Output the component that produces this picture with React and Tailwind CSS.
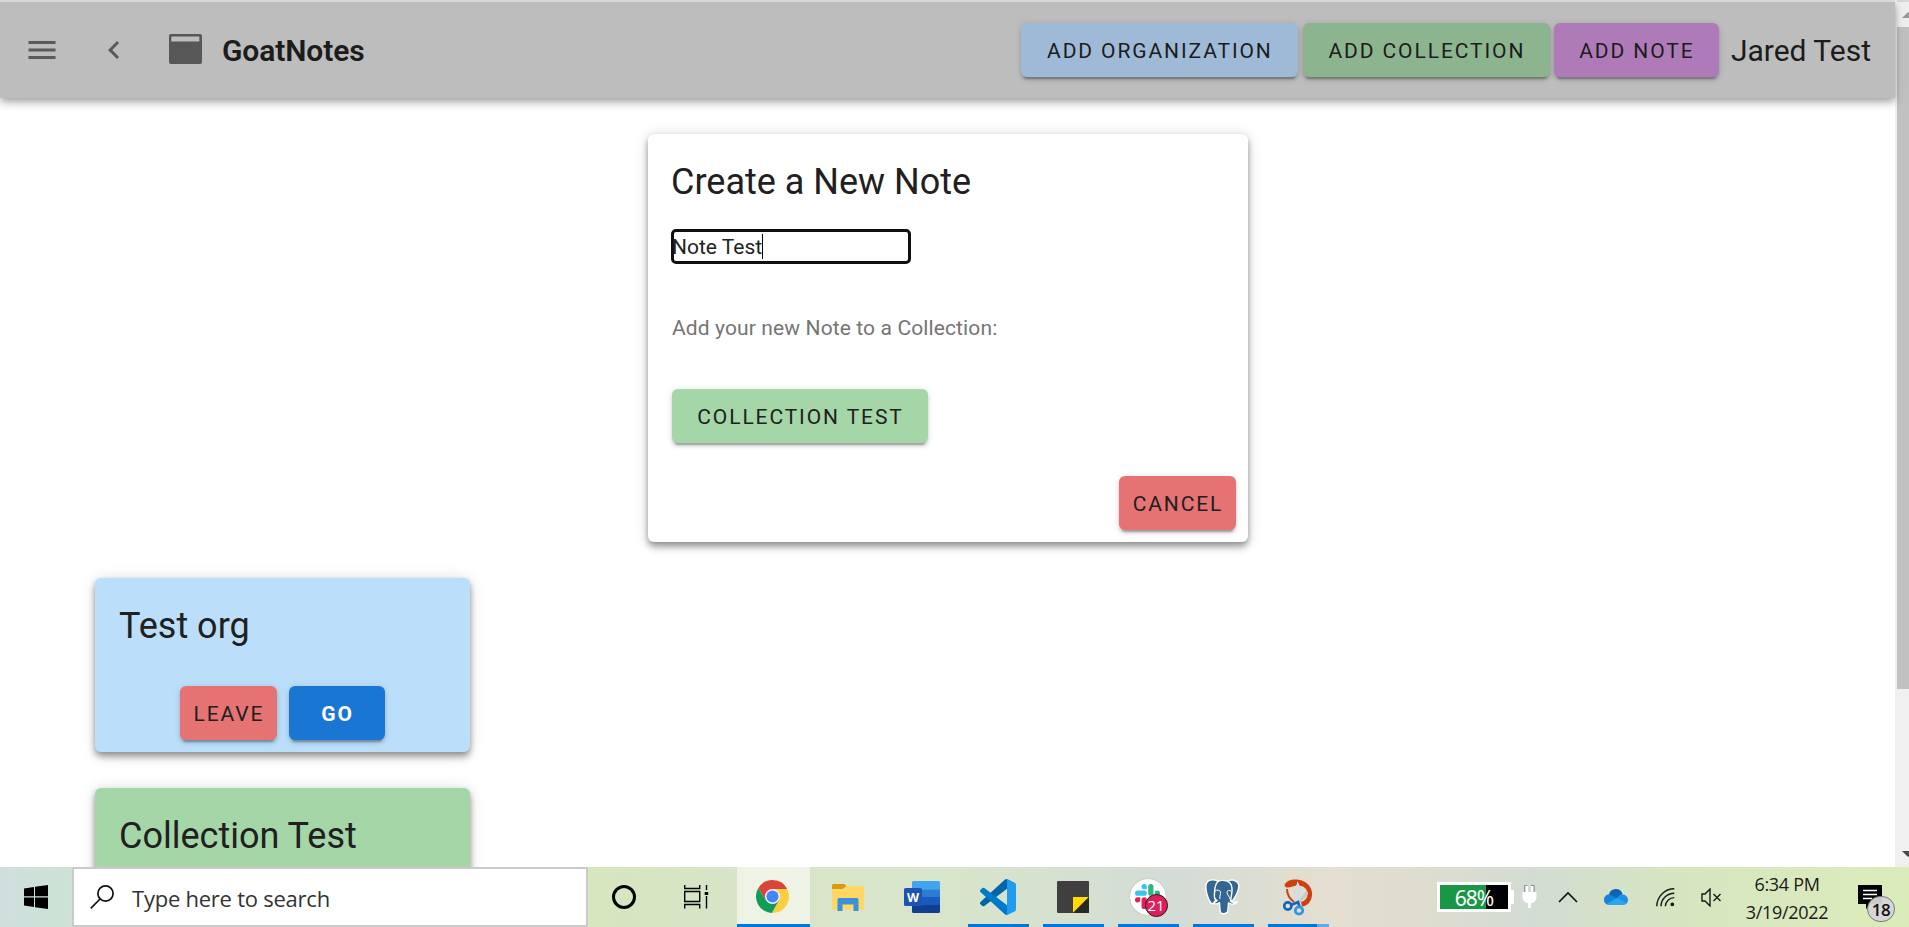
import React from "react";
import { MdMenu, MdChevronLeft } from "react-icons/md";

const cardShadow =
  "shadow-[0_4.5px_1.5px_-3px_rgba(0,0,0,0.2),0_3px_3px_0_rgba(0,0,0,0.14),0_1.5px_7.5px_0_rgba(0,0,0,0.12)]";
const raisedShadow =
  "shadow-[0_3px_6px_-1.5px_rgba(0,0,0,0.3),0_6px_7.5px_0_rgba(0,0,0,0.18),0_1.5px_15px_0_rgba(0,0,0,0.14)]";

function Button({ children, className, weight = "font-[450]" }) {
  return (
    <button
      className={`flex h-[54px] shrink-0 items-center justify-center whitespace-nowrap rounded-[6px] pl-px pt-[3px] text-[21px] tracking-[1.9px] ${weight} ${cardShadow} ${className}`}
    >
      {children}
    </button>
  );
}

function Header() {
  return (
    <header className="relative z-10 flex h-[98px] shrink-0 items-center border-t-2 border-[#d9d9d9] bg-[#bdbdbd] pl-6 pr-6 text-[#1c1c1c] shadow-[0_3px_6px_-1.5px_rgba(0,0,0,0.2),0_6px_7.5px_0_rgba(0,0,0,0.14),0_1.5px_15px_0_rgba(0,0,0,0.12)]">
      <MdMenu className="-mt-px size-9 text-[#5a5a5a]" />
      <MdChevronLeft className="-mt-px ml-9 size-9 text-[#5a5a5a]" />
      <svg viewBox="0 0 33 30" className="-mt-[2px] ml-[37px] h-[30px] w-[33px]">
        <path fillRule="evenodd" fill="#575757" d="M2 0h29a2 2 0 0 1 2 2v26a2 2 0 0 1-2 2H2a2 2 0 0 1-2-2V2a2 2 0 0 1 2-2zM2.300 2.600v5h28v-5z" />
      </svg>
      <h1 className="ml-5 pt-px text-[30px] font-semibold leading-9 tracking-[-0.1px]">GoatNotes</h1>
      <div className="ml-auto flex items-center">
        <Button className="w-[277px] bg-[#9ebad6]">ADD ORGANIZATION</Button>
        <Button className="ml-[5px] w-[247px] bg-[#8cb48e]">ADD COLLECTION</Button>
        <Button className="ml-1 w-[165px] bg-[#ae7bb8]">ADD NOTE</Button>
        <span className="ml-3 pt-px text-[30px] leading-9">Jared Test</span>
      </div>
    </header>
  );
}

function NoteDialog() {
  return (
    <section className={`ml-[648px] mt-9 flex h-[408px] w-[600px] shrink-0 flex-col rounded-[6px] bg-white ${raisedShadow}`}>
      <div className="px-6 pt-6">
        <h2 className="-ml-px text-[36px] leading-[48px]">Create a New Note</h2>
        <div className="-ml-px mt-[23px] flex h-[35px] w-[240px] items-center rounded-[5px] border-[3px] border-[#101010]">
          <span className="-ml-[2px] text-[21px] leading-6 text-[#222]">Note Test</span>
          <span className="h-[25px] w-px bg-black" />
        </div>
        <p className="mt-[48px] text-[21px] leading-[33px] tracking-[0.12px] text-[#757575]">
          Add your new Note to a Collection:
        </p>
        <Button className="mt-[44px] w-[256px] bg-[#a5d6a7]">COLLECTION TEST</Button>
      </div>
      <div className="mt-auto flex justify-end px-3 pb-3">
        <Button className="w-[117px] bg-[#e57373]">CANCEL</Button>
      </div>
    </section>
  );
}

function ScrollBar() {
  return (
    <aside className="flex w-[14px] shrink-0 flex-col overflow-hidden bg-[#f0f0f0] pl-[2px]">
      <div className="h-[2px] shrink-0 bg-[#d9d9d9]" />
      <div className="flex h-[25px] shrink-0 items-start pl-[5px] pt-[9px]">
        <svg viewBox="0 0 12 7" className="h-[7px] w-3 shrink-0">
          <path d="M0 7 6 1l6 6z" fill="#9b9b9b" />
        </svg>
      </div>
      <div className="h-[662px] shrink-0 bg-[#c1c1c1]" />
      <div className="mt-auto flex h-[16px] shrink-0 pl-[5px]">
        <svg viewBox="0 0 12 7" className="h-[7px] w-3 shrink-0">
          <path d="M0 0h12L6 6z" fill="#4a4a4a" />
        </svg>
      </div>
    </aside>
  );
}

function Task({ children, active, running, recent }) {
  return (
    <div className={`flex h-full w-[75px] shrink-0 flex-col items-center ${active ? "border-x border-[#d8e4c6] bg-[#eef3e6]" : ""}`}>
      <div className="flex h-[57px] w-full items-center justify-center pr-[2px] pt-[2px]">{children}</div>
      {active && <div className="h-[3px] w-full bg-[#0078d7]" />}
      {running && (
        <div className="flex h-[3px] w-[61px]">
          <div className="flex-1 bg-[#0078d7]" />
          {recent && <div className="w-3 bg-[#66a9dc]" />}
        </div>
      )}
    </div>
  );
}

function ChromeIcon() {
  return (
    <svg viewBox="0 0 48 48" className="size-[33px]">
      <path d="M24 13h21.300A24 24 0 0 0 3.200 12L14.500 29.500z" fill="#db4437" />
      <path d="M33.500 29.500 23 48A24 24 0 0 0 45.300 13H24z" fill="#ffcd40" />
      <path d="M14.500 29.500 3.200 12A24 24 0 0 0 23 48l10.500-18.500z" fill="#0f9d58" />
      <circle cx="24" cy="24" r="11" fill="#f1f1f1" />
      <circle cx="24" cy="24" r="8.800" fill="#4285f4" />
    </svg>
  );
}

function FolderIcon() {
  return (
    <svg viewBox="0 0 32 27" className="mt-px h-[27px] w-8">
      <path d="M0 1.500Q0 0 1.500 0h11l2.500 3v4H0z" fill="#d99a10" />
      <path d="M0 5h10.500l4-3H30q2 0 2 2v20q0 1.500-1.500 1.500h-29Q0 25.500 0 24z" fill="#ffd766" />
      <path d="M5.500 27V15.500q0-1.500 1.500-1.500h18q1.500 0 1.500 1.500V27h-5v-6.500h-11V27z" fill="#3c92d4" />
    </svg>
  );
}

function WordIcon() {
  return (
    <svg viewBox="0 0 36 32" className="mr-px h-8 w-9">
      <path d="M8 9V1.500Q8 0 9.500 0h25Q36 0 36 1.500V8.500H8z" fill="#41a5ee" />
      <path d="M8 8.300h28v8H8z" fill="#2b7cd3" />
      <path d="M8 16h28v8H8z" fill="#185abd" />
      <path d="M8 24h28v6.500q0 1.500-1.500 1.500h-25Q8 32 8 30.500z" fill="#103f91" />
      <rect y="7" width="18" height="18" rx="1.500" fill="#1b54b3" />
      <text x="9" y="20.500" textAnchor="middle" fontSize="12.500" fontWeight="700" fontFamily="Open Sans, sans-serif" fill="#fff">W</text>
    </svg>
  );
}

function CodeIcon() {
  return (
    <svg viewBox="0 0 100 100" className="size-9">
      <path d="M96.500 10.800 75.900.9a6.200 6.200 0 0 0-7.100 1.200L1.300 63.600a4.200 4.200 0 0 0 0 6.200l5.500 5a4.200 4.200 0 0 0 5.300.2L93.400 13.400c2.700-2.100 6.600-.1 6.600 3.300v-.2a6.300 6.300 0 0 0-3.500-5.700z" fill="#0065a9" />
      <path d="m96.500 89.200-20.600 9.900a6.200 6.200 0 0 1-7.100-1.200L1.300 36.400a4.200 4.200 0 0 1 0-6.200l5.500-5a4.200 4.200 0 0 1 5.300-.2l81.300 61.600c2.700 2.100 6.600.1 6.600-3.300v.2a6.300 6.300 0 0 1-3.500 5.700z" fill="#007acc" />
      <path d="M75.900 99.100a6.200 6.200 0 0 1-7.100-1.200c2.300 2.300 6.200.7 6.200-2.600V4.700c0-3.300-3.900-4.900-6.200-2.600A6.200 6.200 0 0 1 75.900.9l20.600 9.900a6.300 6.300 0 0 1 3.500 5.700v67.100a6.300 6.300 0 0 1-3.500 5.700z" fill="#1f9cf0" />
    </svg>
  );
}

function StickyIcon() {
  return (
    <svg viewBox="0 0 32 32" className="size-8">
      <rect width="32" height="32" rx="1" fill="#3f3f3f" />
      <path d="M16 16h16L16 32z" fill="#ffd90a" />
      <path d="M32 16 16 32h16z" fill="#272727" />
    </svg>
  );
}

function SlackIcon() {
  return (
    <div className="relative flex size-9 items-center justify-center rounded-full bg-white shadow-[0_0_1px_#888]">
      <svg viewBox="0 0 24 24" className="size-[25px]">
        <g fill="#36c5f0"><rect x="0" y="6.300" width="11.300" height="5" rx="2.500" /><path d="M8.800 0a2.500 2.500 0 1 0 0 5h2.500V2.500A2.500 2.500 0 0 0 8.800 0z" /></g>
        <g fill="#2eb67d"><rect x="12.700" y="0" width="5" height="11.300" rx="2.500" /><path d="M24 8.800a2.500 2.500 0 1 0-5 0v2.500h2.500A2.500 2.500 0 0 0 24 8.800z" /></g>
        <g fill="#ecb22e"><rect x="12.700" y="12.700" width="11.300" height="5" rx="2.500" /><path d="M15.200 24a2.500 2.500 0 1 0 0-5h-2.500v2.500a2.500 2.500 0 0 0 2.500 2.500z" /></g>
        <g fill="#e01e5a"><rect x="6.300" y="12.700" width="5" height="11.300" rx="2.500" /><path d="M0 15.200a2.500 2.500 0 1 0 5 0v-2.500H2.500A2.500 2.500 0 0 0 0 15.200z" /></g>
      </svg>
      <span className="absolute left-[15px] top-[15px] flex size-[23px] items-center justify-center rounded-full border-[1.5px] border-[#33101c] bg-[#dc1f5d] font-['Open_Sans',sans-serif] text-[15px] leading-none text-white">21</span>
    </div>
  );
}

function PostgresIcon() {
  return (
    <svg viewBox="0 0 35 36" className="h-9 w-[35px]">
      <g fill="#336791" stroke="#fff" strokeWidth="1.400" strokeLinejoin="round">
        <path d="M13 2C8 0 2 .5 1 6c-.8 5 2 14 4.500 17.500 1.500 2 3 1.500 4-.5L13 17z" />
        <path d="M22 2.500C26 0 32 .8 33.500 5c1.200 4.500-2.500 12-6 17l-4-1z" />
        <path d="M12.500 3C15 .8 22 .6 25 4c2 2.500 2.300 8 1.500 12l-1 6c1.500 1.800 4.500 1.500 6.500.3.800 1.400-2.500 3-5 2.800-1.500 0-2.500-.7-3.500-1.200-.3 3-.3 7-1.200 9.200-.9 2-5.800 2.300-6.800.2-.9-2.300-.7-6.300-1-9.800-1.500 1.300-4 1.700-5.700.8-1.500-1 2.700-1.300 3.200-2.800-2.500-1-3-3.500-2.500-7C9.800 11 9.500 6 12.500 3z" />
      </g>
      <path d="M10 12c2-1.500 5-1 5.500 1 .4 2-1 4-.7 7M26 12c-2-1-4-.5-4 1.500 0 2 2.800 4.500 3.500 7.500" fill="none" stroke="#fff" strokeWidth="1" />
    </svg>
  );
}

function SnipIcon() {
  return (
    <svg viewBox="0 0 32 37" className="ml-[2px] mt-[2px] h-[37px] w-8">
      <path fillRule="evenodd" d="M2 5C5 0 14-.5 20 2c6 2.500 9.500 8 9 14-.5 7-5 11-10 11.500l-1-4.500c4-1 6.500-4 6.500-8 0-5-4-8.500-9-8.500C11 6.500 8 8.500 5 8.500 2.500 8.500 1 7 2 5z" fill="#cf3f10" />
      <path d="M4 10c0 6 3 10 7 13" fill="none" stroke="#cf3f10" strokeWidth="2" />
      <path d="M14.500 2.500 18 10v9l5-7.500q4 2 0 6L14.500 26l-3-1V14z" fill="#c5cbcf" />
      <path d="M14.500 2.500 18 10v9l-4 6-2.500-1V13z" fill="#d9dcde" />
      <path d="m8 26 7-3 2 6" fill="none" stroke="#1467b8" strokeWidth="2.600" />
      <circle cx="4.800" cy="27" r="3.600" fill="none" stroke="#1467b8" strokeWidth="2.600" />
      <circle cx="16" cy="31.500" r="3.700" fill="none" stroke="#2f97e6" strokeWidth="2.800" />
    </svg>
  );
}

function Tray() {
  return (
    <div className="ml-auto flex h-full items-center">
      <div className="relative flex h-[30px] w-[74px] items-center justify-center border-[3px] border-white bg-[linear-gradient(90deg,#1a9647_0_68%,#000_68%)] pt-[3px] font-['Noto_Sans',sans-serif] text-[21px] leading-none tracking-[-1px] text-white">
        68%
        <span className="absolute -right-[6px] top-[5px] h-[14px] w-[3px] bg-white" />
      </div>
      <svg viewBox="0 0 15 24" className="ml-[11px] h-6 w-[15px]">
        <path d="M3 0h3v7h3V0h3v7h2.500v5q0 4-4 6H9v5H6v-5H4.500q-4-2-4-6V7H3z" fill="#fff" />
        <path d="M2.800 7V.3h3M9 .5h3V7" fill="none" stroke="#555" strokeWidth=".7" />
      </svg>
      <svg viewBox="0 0 20 12" className="ml-[21px] h-3 w-5"><path d="m1 11 9-9 9 9" fill="none" stroke="#111" strokeWidth="1.600" /></svg>
      <svg viewBox="0 0 24 16" className="ml-[26px] h-4 w-6">
        <path d="M5 5.500A7 7 0 0 1 18.500 5L14 10 3 11z" fill="#0a63b5" />
        <path d="M0 11a5 5 0 0 1 5.500-5.500c3 .5 6 3 9 4.500L8 16H5a5 5 0 0 1-5-5z" fill="#1284d8" />
        <path d="M18 5.500A5.500 5.500 0 0 1 24 11a5 5 0 0 1-1.500 3.500L12.500 9Q15 5.500 18 5.500z" fill="#1c8fe3" />
        <path d="M2.500 15 13 9l10 5.200A5 5 0 0 1 19.500 16H5q-1.500 0-2.500-1z" fill="#2ba5ee" />
      </svg>
      <svg viewBox="0 0 19 19" className="ml-[28px] h-[19px] w-[19px] fill-none stroke-[#1a1a1a] stroke-[1.400]">
        <path d="M.8 18.300A17.500 17.500 0 0 1 18.300.8M5 18.300A13.300 13.300 0 0 1 18.300 5.200M9.300 18.300a9 9 0 0 1 9-8.700" />
        <circle cx="16.300" cy="16.300" r="1.200" className="fill-[#1a1a1a]" />
      </svg>
      <svg viewBox="0 0 21 19" className="ml-[26px] h-[19px] w-[21px] fill-none stroke-[#1a1a1a] stroke-[1.400]">
        <path d="M1 6h3l5-5v17l-5-5H1zM12.500 6l7 7m0-7-7 7" />
      </svg>
      <div className="ml-[20px] mr-[2px] flex w-[90px] flex-col items-center whitespace-nowrap pt-[2px] font-['Open_Sans',sans-serif] text-[18px] leading-[28px] tracking-[-0.3px] text-[#1a1a1a]">
        <span>6:34 PM</span>
        <span>3/19/2022</span>
      </div>
      <div className="relative ml-[24px] mr-[27px] h-6 w-6">
        <svg viewBox="0 0 24 24" className="size-6">
          <path d="M0 0h24v19H13l-5 5v-5H0z" fill="#000" />
          <path d="M5 5.500h14M5 9.500h14M5 13.500h9" stroke="#fff" strokeWidth="1.300" />
        </svg>
        <span className="absolute left-[9px] top-[11px] flex h-[26px] w-[28px] items-center justify-center rounded-full border border-[#777] bg-[#d6d6d6]/95 font-['Open_Sans',sans-serif] text-[17px] font-semibold leading-none tracking-[-0.5px] text-[#111]">18</span>
      </div>
    </div>
  );
}

function Taskbar() {
  return (
    <footer className="flex h-[60px] shrink-0 items-center bg-[linear-gradient(90deg,#cfdfdf_0px,#cde3d4_72px,#d6e6bf_590px,#d8e5c8_737px,#d8e5cb_960px,#d4dcd6_1170px,#e4dfd0_1330px,#dfddcf_1420px,#d3dcd3_1530px,#d7e6bf_1690px,#dbecbb_1909px)]">
      <div className="flex w-[72px] shrink-0 justify-center">
        <svg viewBox="0 0 24 24" className="size-6"><path d="M0 3.400 10 2v9.300H0zM11 1.800 24 0v11.300H11zM0 12.500h10V22L0 20.600zM11 12.500h13V24l-13-1.800z" fill="#000" /></svg>
      </div>
      <div className="flex h-[60px] w-[516px] shrink-0 items-center border-2 border-[#c9cbc9] bg-white pl-4">
        <svg viewBox="0 0 24 24" className="size-6"><circle cx="15.500" cy="8.500" r="7.600" fill="none" stroke="#111" strokeWidth="1.700" /><path d="M10 14 .8 23.300" stroke="#111" strokeWidth="1.700" /></svg>
        <span className="ml-[18px] whitespace-nowrap pt-px font-['Open_Sans',sans-serif] text-[22px] leading-8 tracking-[-0.24px] text-[#333]">Type here to search</span>
      </div>
      <div className="flex w-[73px] shrink-0 justify-center pr-px"><div className="size-6 rounded-full border-[3px] border-black" /></div>
      <div className="flex w-[75px] shrink-0 justify-center pr-1">
        <svg viewBox="0 0 25 24" className="h-6 w-[25px] fill-none stroke-black stroke-[1.400]"><path d="M.7 0v3.500h15V0M.7 6.500h15v10h-15zM.7 23.500v-4h15v4M22.500 0v5M22.500 11v12.500" /><path d="M20.700 7h3.500v3h-3.500z" className="fill-black stroke-none" /></svg>
      </div>
      <Task active><ChromeIcon /></Task>
      <Task><FolderIcon /></Task>
      <Task><WordIcon /></Task>
      <Task running><CodeIcon /></Task>
      <Task running><StickyIcon /></Task>
      <Task running><SlackIcon /></Task>
      <Task running><PostgresIcon /></Task>
      <Task running recent><SnipIcon /></Task>
      <Tray />
    </footer>
  );
}

export default function App() {
  return (
    <div className="flex h-[927px] w-[1909px] flex-col overflow-hidden bg-white font-[Roboto,sans-serif]">
      <div className="flex h-[867px] shrink-0 overflow-hidden">
        <div className="flex w-[1895px] shrink-0 flex-col text-[#202020]">
          <Header />
          <NoteDialog />
          <div className="mt-9 flex flex-col gap-9 pl-[95px]">
            <section className={`flex h-[174px] w-[375px] flex-col justify-between rounded-[6px] bg-[#bbdefb] ${raisedShadow}`}>
              <h2 className="px-6 pt-6 text-[36px] leading-[48px]">Test org</h2>
              <div className="flex gap-3 pb-3 pl-[85px]">
                <Button className="w-[97px] bg-[#e57373]">LEAVE</Button>
                <Button weight="font-bold" className="w-[96px] bg-[#1976d2] text-white">GO</Button>
              </div>
            </section>
            <section className={`h-[174px] w-[375px] rounded-[6px] bg-[#a5d6a7] ${raisedShadow}`}>
              <h2 className="px-6 pt-6 text-[36px] leading-[48px]">Collection Test</h2>
            </section>
          </div>
        </div>
        <ScrollBar />
      </div>
      <Taskbar />
    </div>
  );
}
